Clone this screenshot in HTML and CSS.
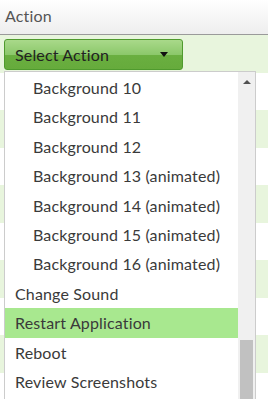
FILE: index.html
```html
<!DOCTYPE html>
<html lang="en">
<head>
<meta charset="UTF-8">
<title>Action</title>
<link rel="stylesheet" href="styles.css">
</head>
<body>

<div class="cabecera">Action</div>

<div class="filas">
  <div class="fila par">
    <button class="boton">Select Action <span class="caret"></span></button>
  </div>
  <div class="fila"></div>
  <div class="fila par"></div>
  <div class="fila"></div>
  <div class="fila par"></div>
  <div class="fila"></div>
  <div class="fila par"></div>
  <div class="fila"></div>
  <div class="fila par"></div>
  <div class="fila"></div>
</div>

<div class="menu">
  <ul class="lista">
    <li class="sub">Background 10</li>
    <li class="sub">Background 11</li>
    <li class="sub">Background 12</li>
    <li class="sub">Background 13 (animated)</li>
    <li class="sub">Background 14 (animated)</li>
    <li class="sub">Background 15 (animated)</li>
    <li class="sub">Background 16 (animated)</li>
    <li>Change Sound</li>
    <li class="activo">Restart Application</li>
    <li>Reboot</li>
    <li>Review Screenshots</li>
  </ul>
  <div class="barra">
    <span class="flecha"></span>
    <div class="pulgar"></div>
  </div>
</div>

</body>
</html>
```

FILE: styles.css
```css
body {
  margin: 0;
  padding: 0;
  font-family: Lato, "Open Sans", sans-serif;
  font-size: 16px;
  letter-spacing: 0.15px;
  color: #3a3a3a;
  background: #fff;
  overflow: hidden;
  position: relative;
  height: 399px;
}

.cabecera {
  height: 34px;
  line-height: 32px;
  padding-left: 5px;
  color: #555;
  background: linear-gradient(#fff, #eee);
  border-bottom: 1px solid #9a9a9a;
}

.fila {
  height: 37.5px;
  box-sizing: border-box;
  padding: 4px 4px 0;
}

.fila.par {
  background-color: #e8f5dd;
}

.boton {
  width: 179px;
  height: 31px;
  display: flex;
  align-items: center;
  justify-content: space-between;
  padding: 0 14px 0 10px;
  font-family: inherit;
  font-size: 16px;
  letter-spacing: 0.15px;
  color: #222;
  border: 1px solid #4f9a2e;
  border-radius: 3px;
  background: linear-gradient(#a9d98a 0%, #8cc86b 50%, #6aaf40 50%, #66ab3c 100%);
  cursor: pointer;
}

.caret {
  width: 0;
  height: 0;
  border-left: 4px solid transparent;
  border-right: 4px solid transparent;
  border-top: 5px solid #111;
}

.menu {
  position: absolute;
  top: 71px;
  left: 4px;
  width: 250px;
  height: 340px;
  border: 1px solid #ccc;
  background: #fff;
  display: flex;
}

.lista {
  flex: 1;
  list-style: none;
  margin: 0;
  padding: 1px 0 0;
}

.lista li {
  height: 29.4px;
  line-height: 29.4px;
  padding-left: 10px;
  white-space: nowrap;
}

.lista li.sub {
  padding-left: 28px;
}

.lista li.activo {
  background-color: #a8e88f;
}

.barra {
  width: 17px;
  background: #f0f0f0;
  display: flex;
  flex-direction: column;
  align-items: center;
  justify-content: space-between;
}

.flecha {
  margin-top: 8px;
  width: 0;
  height: 0;
  border-left: 4px solid transparent;
  border-right: 4px solid transparent;
  border-bottom: 4px solid #505050;
}

.pulgar {
  width: 13px;
  height: 72px;
  background: #c1c1c1;
}
```
